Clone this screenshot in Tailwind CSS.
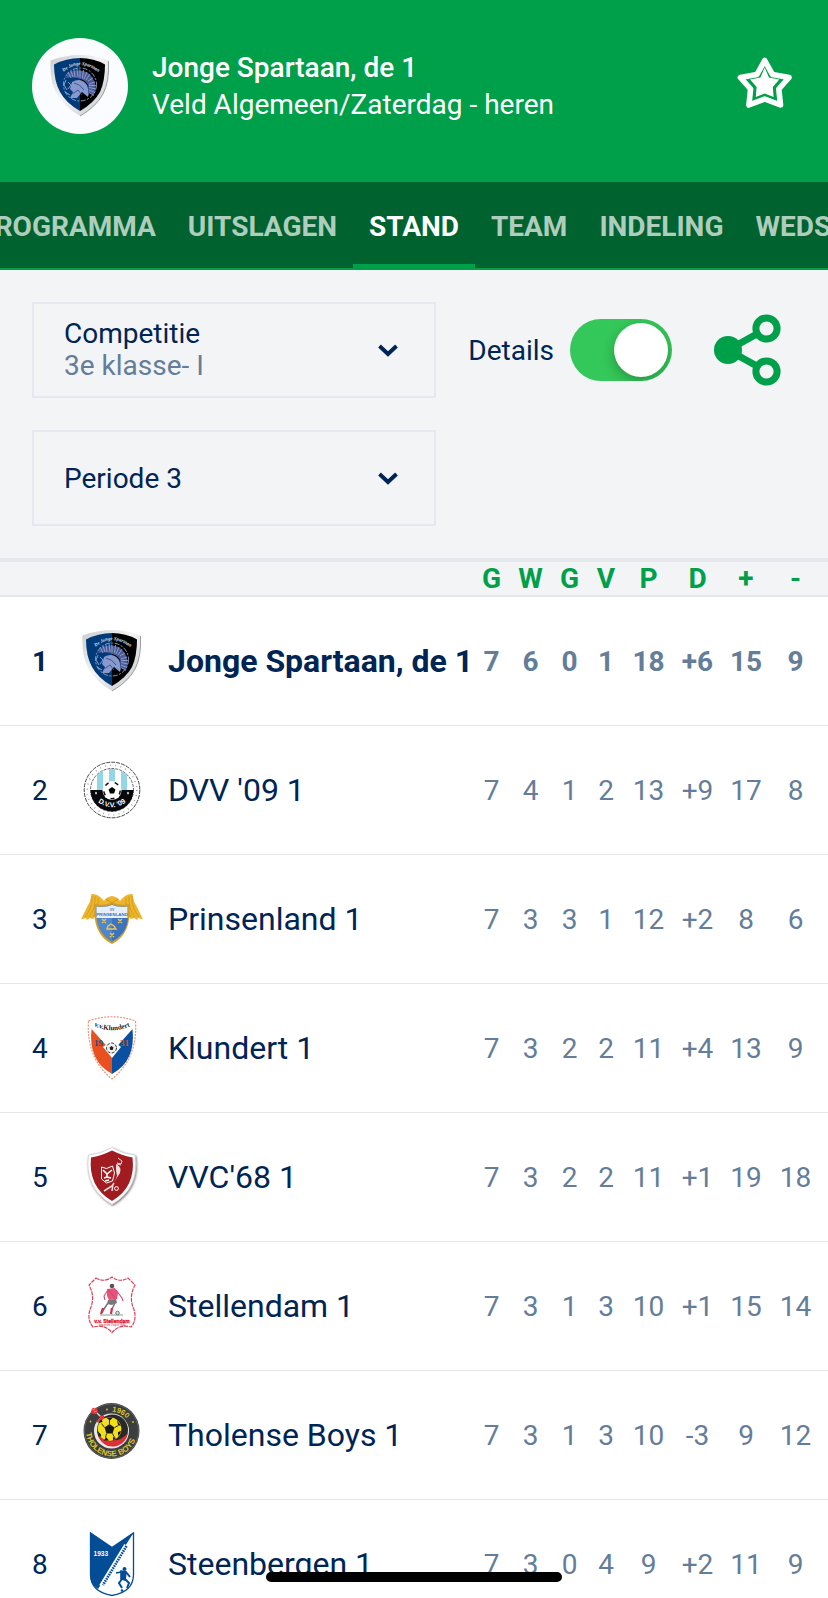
<!DOCTYPE html>
<html lang="nl">
<head>
    <meta charset="utf-8">
    <meta name="viewport" content="width=device-width, initial-scale=1">
    <title>Jonge Spartaan, de 1 - Stand</title>
    <script src="https://cdn.jsdelivr.net/npm/@tailwindcss/browser@4"></script>
</head>
<body class="h-screen overflow-hidden bg-white font-[Roboto,sans-serif] text-[28px] leading-8 text-[#002454]">

    <!-- Club crests -->
    <svg class="absolute size-0" aria-hidden="true">
        <defs>
            <linearGradient id="silver" x1="0" y1="0" x2="1" y2="1">
                <stop offset="0" stop-color="#c9cbcd"/>
                <stop offset="0.45" stop-color="#f4f4f5"/>
                <stop offset="0.8" stop-color="#d5d6d8"/>
                <stop offset="1" stop-color="#8b8d90"/>
            </linearGradient>
            <filter id="soft" x="-20%" y="-20%" width="140%" height="140%">
                <feDropShadow dx="0.8" dy="1" stdDeviation="0.8" flood-color="#000" flood-opacity="0.6"/>
            </filter>

            <symbol id="spartaan" viewBox="0 0 64 64">
                <path d="M2.500 6.500Q32 -4.500 60.500 6.500Q61.500 28 55 40Q48 53 32 62Q16 53 9 40Q1.500 28 2.500 6.500Z" fill="url(#silver)"/>
                <path d="M60.500 7Q61.500 28 55 40Q48 53 32 62" fill="none" stroke="#85878a" stroke-width="0.8"/>
                <path d="M6 10.500Q18 4 32 4V57Q18 49 12 38Q6 27 6 10.500Z" fill="#003a79"/>
                <path d="M57 10.500Q46 4 32 4V57Q46 49 52 38Q57 27 57 10.500Z" fill="#000"/>
                <path id="spartaanArc" d="M15.500 18Q32 4 50 18" fill="none"/>
                <text font-family="Liberation Serif, serif" font-style="italic" font-size="4.800" font-weight="bold" fill="#dfe3ee"><textPath href="#spartaanArc">De Jonge Spartaan</textPath></text>
                <circle cx="32" cy="30.500" r="16.500" fill="none" stroke="#a9b7da" stroke-width="0.8" stroke-dasharray="5 1.500 2 1.500"/>
                <path d="M18 24Q20 17 27 17Q38 15 44 23Q50 32 46 41L40 38Q42 29 35 26Q27 22 18 24Z" fill="#4a5d9a"/>
                <path d="M20 18l3 6M23 17l2 6M26 16l1 7M29 15l1 8M32 15.500l0 8M35.500 16l-1 8M39 18l-3 7M42 20l-4 6M45 24l-5 3M47 28l-6 2M48 31.500l-7 0M48 35l-7-1.500M47 38.500l-6-2.500M46 41.500l-5-3" stroke="#a9b7da" stroke-width="0.7"/>
                <path d="M24 28Q33 23 39 31Q42 38 40 43L34 38L29 44L22 44L25 38L22 35Z" fill="#8799cd"/>
                <path d="M26 29Q32 30 36 36M24 40l6-4 4 5M40 31l1 9" stroke="#34529a" fill="none" stroke-width="0.9"/>
                <path d="M18 26l-2 5 3 5M17 38l5 3M20 28l3 3-3 4" stroke="#a9b7da" fill="none" stroke-width="0.8"/>
            </symbol>

            <symbol id="dvv" viewBox="0 0 64 64">
                <circle cx="32" cy="32" r="27.800" fill="#fff" stroke="#333" stroke-width="0.9" stroke-dasharray="4 1"/>
                <circle cx="32" cy="32" r="24.800" fill="none" stroke="#888" stroke-width="1.600" stroke-dasharray="0.700 4.500"/>
                <circle cx="32" cy="32" r="21.500" fill="#fff" stroke="#444" stroke-width="0.8" stroke-dasharray="3 1"/>
                <path d="M17 17.500Q19.500 14 23 12.600V32H17ZM29 11h6v21h-6ZM41 12.600Q44.500 14 47 17.500V32H41Z" fill="#93d6e6"/>
                <path d="M10.500 32a21.500 21.500 0 0 0 43 0Z" fill="#08080c"/>
                <circle cx="32" cy="32.500" r="9.500" fill="#fff"/>
                <circle cx="32" cy="32.500" r="8.200" fill="none" stroke="#111" stroke-width="1.500" stroke-dasharray="4 6.300"/>
                <path d="M32 29l3.400 2.400-1.300 4h-4.200l-1.300-4Z" fill="#000"/>
                <path d="M16 33.500l1 1.600-1 1.600-1-1.600ZM48 33.500l1 1.600-1 1.600-1-1.600Z" fill="#fff"/>
                <path id="dvvArc" d="M17 43.500Q32 55 47 43.500" fill="none"/>
                <text font-family="Liberation Sans, sans-serif" font-size="7" font-weight="bold" fill="#fff"><textPath href="#dvvArc" startOffset="1">D.V.V. '09</textPath></text>
            </symbol>

            <symbol id="prinsenland" viewBox="0 0 64 64">
                <path d="M32 9Q26 10 24 14Q18 6 11.500 7L10 14.500L6.500 21L1 32.500L6 31L7 33L10 31L13 32L16 29H48L51 32L54 31L57 33L58 31L63 32.500L57.500 21L54 14.500L52.500 7Q46 6 40 14Q38 10 32 9Z" fill="#efb528"/>
                <path d="M12 9Q13 20 5 30M15 9Q16 21 9 30M18 11Q19 20 13 30M52 9Q51 20 59 30M49 9Q48 21 55 30M46 11Q45 20 51 30" stroke="#c9952a" stroke-width="0.8" fill="none"/>
                <path d="M26 12l6 4 6-4" stroke="#c8922a" stroke-width="1" fill="none"/>
                <path d="M15.500 18Q24 20 32 16.500Q40 20 48.500 18Q51 46 32 56Q13 46 15.500 18Z" fill="#4f86cc" stroke="#d09e26" stroke-width="1.800"/>
                <path d="M32 31H48Q47 47 32 54Z" fill="#3b73bf"/>
                <path d="M16.500 19.500Q25 21 32 18Q39 21 47.500 19.500V31H16.500Z" fill="#e6eefa"/>
                <text x="32" y="28.500" text-anchor="middle" font-family="Liberation Sans, sans-serif" font-size="4.400" font-weight="bold" fill="#3d74b8">PRINSENLAND</text>
                <text x="32" y="23.500" text-anchor="middle" font-family="Liberation Sans, sans-serif" font-size="3.500" font-weight="bold" fill="#3d74b8">VV</text>
                <path d="M22 32l4 4m0-4l-4 4M38 32l4 4m0-4l-4 4M30 46l4 4m0-4l-4 4M28 39l3-2 3 2 2 3h-9Z" stroke="#ecc655" stroke-width="1.400" fill="none"/>
            </symbol>

            <symbol id="klundert" viewBox="0 0 64 64">
                <path d="M8.500 5Q32 -3.500 55.500 5Q58 42 32 63Q6 42 8.500 5Z" fill="#fff" stroke="#e9937a" stroke-width="1.200" stroke-dasharray="2 1.200"/>
                <path d="M11.500 13L32 36V58Q8 45 11.500 13Z" fill="#e8501f"/>
                <path d="M52.500 13L32 36V58Q56 45 52.500 13Z" fill="#0a50a1"/>
                <path d="M32 24l9 7-9 11-9-11Z" fill="#fff"/>
                <circle cx="31.500" cy="32" r="5" fill="#eee" stroke="#333" stroke-width="1" stroke-dasharray="3 1.500"/>
                <path d="M31.500 30l2 1.500-.8 2.500h-2.400l-.8-2.500Z" fill="#222"/>
                <path id="klundertArc" d="M13 9.500Q32 19 52 9.500" fill="none"/>
                <text font-family="Liberation Serif, serif" font-size="7" font-weight="bold" fill="#222"><textPath href="#klundertArc" startOffset="1">v.v.Klundert</textPath></text>
                <text x="14" y="29.500" font-family="Liberation Serif, serif" font-size="9" font-weight="bold" fill="#1b4d8f">19</text>
                <text x="40" y="29.500" font-family="Liberation Serif, serif" font-size="9" font-weight="bold" fill="#d9472b">31</text>
            </symbol>

            <symbol id="vvc" viewBox="0 0 64 64">
                <path d="M32 2.500Q43 9 55 10Q60 43 32 59.500Q4 43 8.500 10Q21 9 32 2.500Z" fill="#fff" stroke="#bbb" stroke-width="0.5" filter="url(#soft)"/>
                <path d="M32 5.500Q43 11 52.500 12.500Q56 42 32 56Q8 42 11 12.500Q21 11 32 5.500Z" fill="#a11c20"/>
                <path d="M21.500 22l5 1.500 6-2.500 2 7-2 8-6 2-5-4Z" fill="none" stroke="#fff" stroke-width="1"/>
                <path d="M23 25l4 4 5-4M27 29v3M24 33l3-1 4 1M25 36l4-1" stroke="#fff" stroke-width="1.600" fill="none"/>
                <path d="M38 13l4 3-1 3-4-1M37 19l4 1" stroke="#f3dcdc" stroke-width="1" fill="none"/>
                <path d="M36 19Q42 22 40 28L36 34L34 38L37 31L36 25Z" fill="#f3dcdc"/>
                <path d="M34 38l-2 3-8 5M33 39l-1 7" stroke="#f3dcdc" stroke-width="1.500" fill="none"/>
                <circle cx="36.500" cy="43.500" r="1.900" fill="#a11c20" stroke="#fff" stroke-width="1"/>
            </symbol>

            <symbol id="stellendam" viewBox="0 0 64 64">
                <path d="M16 4Q24 9 32 3Q40 9 48 4L55 11Q49 22 53 33Q58 45 51 53Q39 50 32 58.500Q25 50 13 53Q6 45 11 33Q15 22 9 11Z" fill="#fff" stroke="#dc4257" stroke-width="1.200" stroke-dasharray="4 0.800"/>
                <circle cx="32" cy="12" r="2.300" fill="#555"/>
                <path d="M27 15l8-1 3 5-1 6-8 1-2-4Z" fill="#e8527b"/>
                <path d="M28 16l-4 6 1 4M36 16l6 8 1 3M29 16l6 8" stroke="#d1486c" stroke-width="1.100" fill="none"/>
                <path d="M28 26l8-1 1 4-5 2-5-1Z" fill="#777"/>
                <path d="M28 29l-4 6-2 4M35 29l-3 6" stroke="#777" stroke-width="1.500"/>
                <path d="M23 34l-2 6M32 34l-1 6" stroke="#d22c50" stroke-width="2.200"/>
                <path d="M20 41h23" stroke="#5b8a70" stroke-width="0.8"/>
                <circle cx="37.500" cy="39" r="1.800" fill="#ddd" stroke="#555" stroke-width="0.8"/>
                <text x="32" y="48.500" text-anchor="middle" font-family="Liberation Sans, sans-serif" font-size="5" font-weight="bold" fill="#dd1939" stroke="#dd1939" stroke-width="0.3">v.v. Stellendam</text>
                <text x="32" y="52" text-anchor="middle" font-family="Liberation Sans, sans-serif" font-size="2.600" font-weight="bold" fill="#dd5b70">opgericht 2 april 1946</text>
            </symbol>

            <symbol id="tholense" viewBox="0 0 64 64">
                <circle cx="31.500" cy="28" r="28" fill="#3c3d3f"/>
                <circle cx="31.500" cy="28" r="27" fill="none" stroke="#606163" stroke-width="1"/>
                <circle cx="31.500" cy="28" r="17.500" fill="#e8e8e8"/>
                <circle cx="32.500" cy="27" r="15.500" fill="#292929"/>
                <path d="M18 33Q24 46 37 43Q46 40 48 30Q40 39 30 37Z" fill="#dc3038"/>
                <circle cx="29.500" cy="26" r="11.800" fill="#f3df17"/>
                <path d="M29.500 21l5 3.500-2 6h-6l-2-6ZM18.500 20l4-1-1-3Q19 17 18.500 20ZM17.800 28l3.500 4-1 2Q18 31 17.800 28ZM26 14.500h7l-3 3ZM37 17l4 6-3-1ZM41 28l-3 1v4Q40.500 31 41 28ZM26 34l3 3.500H24ZM33 34l3 1-3 2.500Z" fill="#191919"/>
                <path d="M29.500 21v-4M34.500 24.500l4-2M32.500 30.500l2 4M26.500 30.500l-1 4M24.500 24.500l-3-4" stroke="#191919" stroke-width="0.9"/>
                <path d="M15 8L25 18" stroke="#d8d8d8" stroke-width="1.400"/>
                <path d="M17 19l7-6M20 13l3 3" stroke="#ed3036" stroke-width="2.200"/>
                <circle cx="14.500" cy="8" r="3.200" fill="#e72c32"/>
                <path d="M12 6l2 1 1-2M14 9l3-1" stroke="#ff9b98" stroke-width="0.8" fill="none"/>
                <path id="yearArc" d="M31 8.500Q42 9 49 18" fill="none"/>
                <text font-family="Liberation Sans, sans-serif" font-size="7.500" font-weight="bold" fill="#d8c62c"><textPath href="#yearArc" startOffset="1">1960</textPath></text>
                <path id="boysArc" d="M6.300 24A25.500 25.500 0 1 0 56.700 24" fill="none"/>
                <text font-family="Liberation Sans, sans-serif" font-size="8" font-weight="bold" fill="#d8c62c"><textPath href="#boysArc" startOffset="6">THOLENSE BOYS</textPath></text>
                <circle cx="10.500" cy="18.500" r="0.900" fill="#d8c62c"/>
                <circle cx="27" cy="6.500" r="0.900" fill="#d8c62c"/>
                <circle cx="53" cy="19" r="0.900" fill="#d8c62c"/>
            </symbol>

            <symbol id="steenbergen" viewBox="0 0 64 64">
                <path d="M10.500 1L32 15.500L53.500 1V43Q53 60 32 63.500Q11 60 10.500 43Z" fill="#fff" stroke="#034c96" stroke-width="1.300"/>
                <path d="M10 0L32 15.500L54 0L18 57Q10 52 10 43Z" fill="#034c96"/>
                <path d="M46 13L21 54" stroke="#fff" stroke-width="4"/>
                <path d="M46.500 14L23 53" stroke="#034c96" stroke-width="2.600" stroke-dasharray="1.600 0.900"/>
                <text x="13.500" y="23.500" font-family="Liberation Sans, sans-serif" font-size="6.600" font-weight="bold" fill="#fff">1933</text>
                <circle cx="44.500" cy="37" r="2" fill="#034c96"/>
                <path d="M36 41l5-1M41 39l5 1-1 8-4-1Z" stroke="#034c96" stroke-width="1.600" fill="#034c96"/>
                <path d="M46 40l4 5M42 47l-3 4 3 5M45 47l4 4-2 5" stroke="#034c96" stroke-width="2" fill="none"/>
                <circle cx="42" cy="58.500" r="1.300" fill="#034c96"/>
            </symbol>
        </defs>
    </svg>

    <!-- Team header -->
    <header class="flex items-center bg-[#009f4a] pt-[38px] pb-12 pl-8 pr-7 text-white">
        <div class="flex size-24 shrink-0 items-center justify-center rounded-full bg-[#fafcff]">
            <svg class="size-16" viewBox="0 0 64 64" role="img" aria-label="Jonge Spartaan"><use href="#spartaan"/></svg>
        </div>
        <div class="ml-6 min-w-0 flex-1 leading-[37px]">
            <h1 class="font-medium">Jonge Spartaan, de 1</h1>
            <p>Veld Algemeen/Zaterdag - heren</p>
        </div>
        <button type="button" aria-label="Favoriet">
            <svg class="block size-16" viewBox="0 0 64 64">
                <path d="M28.700 6.500L36.500 20.500L53 23.500L42.800 35L44.500 51L28.700 45L12.900 51L14.600 35L4.400 23.500L20.900 20.500Z" fill="none" stroke="#fff" stroke-width="5.600" stroke-linejoin="round"/>
                <path d="M28.700 13.500L33 23.500L43.300 25.500L36.800 33L37.600 43L28.700 39.500L19.800 43L20.600 33L14.100 25.500L24.400 23.500Z" fill="#fff"/>
            </svg>
        </button>
    </header>

    <!-- Tabs, the active one stays in the middle -->
    <nav class="grid h-[88px] grid-cols-[1fr_auto_1fr] overflow-hidden border-b-2 border-[#009f4a] bg-[#00622e] font-bold whitespace-nowrap text-white/70">
        <div class="flex min-w-0 justify-end">
            <a href="#" class="flex items-center px-4 pt-1">PROGRAMMA</a>
            <a href="#" class="flex items-center px-4 pt-1">UITSLAGEN</a>
        </div>
        <a href="#" class="flex items-center border-b-4 border-[#009f4a] px-4 pt-2 text-white" aria-current="page">STAND</a>
        <div class="flex min-w-0">
            <a href="#" class="flex items-center px-4 pt-1">TEAM</a>
            <a href="#" class="flex items-center px-4 pt-1">INDELING</a>
            <a href="#" class="flex items-center px-4 pt-1">WEDSTRIJD</a>
        </div>
    </nav>

    <!-- Filters -->
    <section class="grid grid-cols-[1fr_auto] gap-8 border-b-4 border-[#e4e8ec] bg-[#f2f4f6] py-8 pl-8 pr-[46px]">
        <div class="relative flex h-24 flex-col justify-center border-2 border-[#e5e8ee]">
            <label for="competitie" class="px-[30px]">Competitie</label>
            <select id="competitie" class="h-8 w-full appearance-none px-[30px] text-[#647d99]">
                <option>3e klasse- I</option>
            </select>
            <svg class="pointer-events-none absolute right-9 top-9 h-5 w-5" viewBox="0 0 20 20" fill="none" stroke="#002454" stroke-width="4"><path d="M1.500 6L10 14L18.500 6"/></svg>
        </div>
        <div class="flex items-center">
            <label for="details" class="mr-4 pt-0.5">Details</label>
            <input id="details" type="checkbox" checked class="flex h-[62px] w-[102px] appearance-none items-center overflow-hidden rounded-full bg-gray-300 px-1 before:size-[54px] before:rounded-full before:bg-white before:shadow-[0_4px_12px_rgba(0,0,0,0.25)] checked:justify-end checked:bg-[#34c759]">
            <button type="button" class="ml-10" aria-label="Delen">
                <svg class="block h-[72px] w-[70px]" viewBox="0 0 70 72" fill="none" stroke="#009f4a" stroke-width="7">
                    <path d="M16 36L54 15M16 36L54 57"/>
                    <circle cx="16" cy="36" r="14" fill="#009f4a" stroke="none"/>
                    <circle cx="54.500" cy="14.500" r="10.600" fill="#f2f4f6"/>
                    <circle cx="54.500" cy="57.500" r="10.600" fill="#f2f4f6"/>
                </svg>
            </button>
        </div>
        <div class="relative flex h-24 items-center border-2 border-[#e5e8ee]">
            <select aria-label="Periode" class="h-full w-full appearance-none px-[30px] pt-0.5">
                <option>Periode 3</option>
            </select>
            <svg class="pointer-events-none absolute right-9 top-9 h-5 w-5" viewBox="0 0 20 20" fill="none" stroke="#002454" stroke-width="4"><path d="M1.500 6L10 14L18.500 6"/></svg>
        </div>
    </section>

    <!-- Standings -->
    <table class="w-full table-fixed border-collapse">
        <colgroup>
            <col class="w-20">
            <col class="w-16">
            <col>
            <col class="w-[39px]">
            <col class="w-[39px]">
            <col class="w-[39px]">
            <col class="w-[34px]">
            <col class="w-[51px]">
            <col class="w-[47px]">
            <col class="w-[50px]">
            <col class="w-[49px]">
            <col class="w-2">
        </colgroup>
        <thead class="bg-[#f2f4f6] text-[#009f4a]">
            <tr class="h-[35px] shadow-[inset_0_-2px_0_#e4e8ec]">
                <td colspan="3"></td>
                <th class="pb-0.5">G</th>
                <th class="pb-0.5">W</th>
                <th class="pb-0.5">G</th>
                <th class="pb-0.5">V</th>
                <th class="pb-0.5">P</th>
                <th class="pb-0.5">D</th>
                <th class="pb-0.5">+</th>
                <th class="pb-0.5">-</th>
                <td></td>
            </tr>
        </thead>
        <tbody id="standings"></tbody>
    </table>

    <!-- Home indicator -->
    <div class="fixed bottom-4 left-1/2 h-[10px] w-[296px] -translate-x-1/2 rounded-full bg-black"></div>

    <script>
        const teams = [
            { name: "Jonge Spartaan, de 1", crest: "spartaan", stats: [7, 6, 0, 1, 18, "+6", 15, 9], own: true },
            { name: "DVV '09 1", crest: "dvv", stats: [7, 4, 1, 2, 13, "+9", 17, 8] },
            { name: "Prinsenland 1", crest: "prinsenland", stats: [7, 3, 3, 1, 12, "+2", 8, 6] },
            { name: "Klundert 1", crest: "klundert", stats: [7, 3, 2, 2, 11, "+4", 13, 9] },
            { name: "VVC'68 1", crest: "vvc", stats: [7, 3, 2, 2, 11, "+1", 19, 18] },
            { name: "Stellendam 1", crest: "stellendam", stats: [7, 3, 1, 3, 10, "+1", 15, 14] },
            { name: "Tholense Boys 1", crest: "tholense", stats: [7, 3, 1, 3, 10, "-3", 9, 12] },
            { name: "Steenbergen 1", crest: "steenbergen", stats: [7, 3, 0, 4, 9, "+2", 11, 9] }
        ];

        // Own team is shown in bold
        document.getElementById("standings").innerHTML = teams.map((team, i) => `
            <tr class="h-[129px] shadow-[inset_0_-1px_0_#e4e6ea] ${team.own ? "font-bold" : ""}">
                <td class="pl-8">${i + 1}</td>
                <td class="pb-0.5"><svg class="block size-16" viewBox="0 0 64 64" aria-hidden="true"><use href="#${team.crest}"/></svg></td>
                <td class="pb-0.5 pl-6 text-[32px] whitespace-nowrap">${team.name}</td>
                ${team.stats.map(value => `<td class="text-center text-[#647d99]">${value}</td>`).join("")}
                <td></td>
            </tr>`).join("");
    </script>
</body>
</html>
